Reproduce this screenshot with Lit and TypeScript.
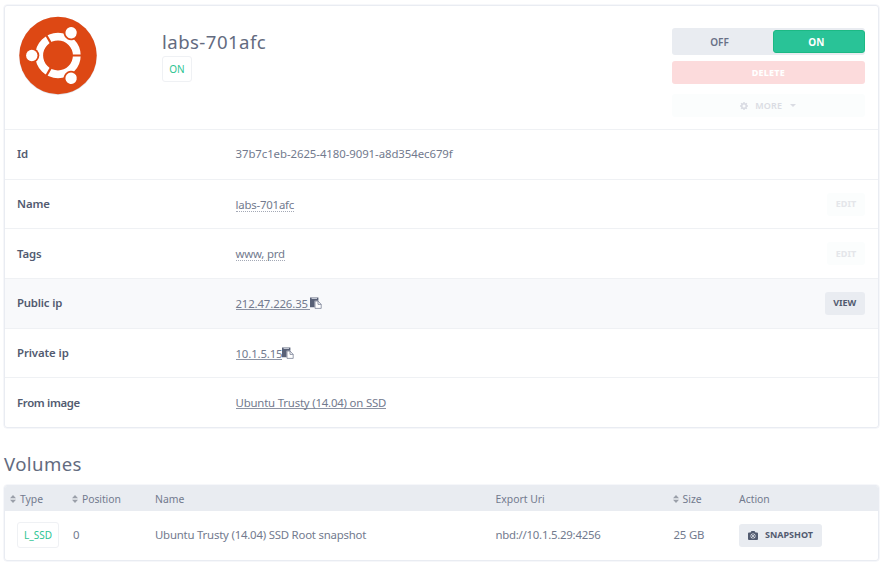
import { LitElement, html, css, svg, nothing } from "lit";
import { customElement } from "lit/decorators.js";
import { classMap } from "lit/directives/class-map.js";

interface Detail {
  label: string;
  value: string;
  kind: "plain" | "dotted" | "link" | "ip";
  gap?: boolean;
  action?: "EDIT" | "VIEW";
  active?: boolean;
}

const details: Detail[] = [
  { label: "Id", value: "37b7c1eb-2625-4180-9091-a8d354ec679f", kind: "plain" },
  { label: "Name", value: "labs-701afc", kind: "dotted", action: "EDIT" },
  { label: "Tags", value: "www, prd", kind: "dotted", action: "EDIT" },
  { label: "Public ip", value: "212.47.226.35", kind: "ip", gap: true, action: "VIEW", active: true },
  { label: "Private ip", value: "10.1.5.15", kind: "ip" },
  { label: "From image", value: "Ubuntu Trusty (14.04) on SSD", kind: "link" },
];

const segments = [0, 120, 240];

const logo = html`<svg class="logo" viewBox="0 0 80 80" width="80" height="80">
  <circle cx="40" cy="40.9" r="39" fill="#dfe3ec" />
  <circle cx="40" cy="40.5" r="38.7" fill="#dd4814" />
  <g transform="translate(0 .5)">
    <circle cx="40" cy="40" r="18.8" fill="none" stroke="#fff" stroke-width="7.8" />
    ${segments.map(
      (a) => svg`<g transform="rotate(${a} 40 40)">
        <path d="M52 40H66" stroke="#dd4814" stroke-width="2.2" />
        <circle cx="13.8" cy="40" r="7.5" fill="#dd4814" />
        <circle cx="13.8" cy="40" r="5.7" fill="#fff" />
      </g>`
    )}
  </g>
</svg>`;

const pasteIcon = html`<svg class="paste" viewBox="0 0 12 12" width="12" height="12">
  <path d="M0 .4H8.4V3.8H4.6V10.2H0Z" fill="#596177" />
  <path d="M1.6 1.4H7" stroke="#c9cdd8" stroke-width="1.1" />
  <path d="M5 4H8L11.2 7.4V11.4H5Z" fill="#fff" stroke="#7b8295" stroke-width=".8" />
  <path d="M8 4V7.4H11.2" fill="none" stroke="#7b8295" stroke-width=".8" />
</svg>`;

const gearIcon = html`<svg class="gear" viewBox="0 0 16 16" width="8" height="8">
  <circle cx="8" cy="8" r="4.6" fill="none" stroke="currentColor" stroke-width="3.2" />
  ${[0, 45, 90, 135].map(
    (a) => svg`<path d="M8 0V3M8 13V16" stroke="currentColor" stroke-width="3" transform="rotate(${a} 8 8)" />`
  )}
</svg>`;

const caret = html`<svg class="caret" viewBox="0 0 6 3" width="6" height="3"><path d="M0 0H6L3 3Z" fill="currentColor" /></svg>`;

const cameraIcon = html`<svg class="camera" viewBox="0 0 20 18" width="10" height="9">
  <path fill="currentColor" fill-rule="evenodd" d="M2 3H5L7 0H13L15 3H18Q20 3 20 5V16Q20 18 18 18H2Q0 18 0 16V5Q0 3 2 3ZM10 5A5 5 0 1 0 10 15A5 5 0 1 0 10 5Z" />
  <circle cx="10" cy="10" r="3" fill="none" stroke="currentColor" stroke-width="1.8" />
</svg>`;

const sortIcon = html`<svg class="sort" viewBox="0 0 6 8" width="6" height="8">
  <path d="M3 0L6 3.2H0ZM3 8L6 4.8H0Z" fill="#9a9fa9" />
</svg>`;

@customElement("app-root")
export class AppRoot extends LitElement {
  static styles = css`
    :host {
      display: block;
      box-sizing: border-box;
      height: 566px;
      padding: 5px 6px 0 4px;
      overflow: hidden;
      background: #fff;
      color: #727a8e;
      font: 11.4px/16px "Noto Sans", "Open Sans", sans-serif;
    }
    * { box-sizing: border-box; }
    svg { display: block; flex: none; }
    .card {
      border: 1px solid #e9ecf2;
      border-radius: 3px;
      box-shadow: 0 0 0 0.5px #eef0f5;
      overflow: hidden;
    }
    .server { height: 423px; display: flex; flex-direction: column; }
    .head { height: 123px; flex: none; display: flex; padding: 9px 13px 0 13px; }
    .text { margin: 15px 0 0 64px; flex: 1; }
    h1, h2 { margin: 0; font-weight: 400; color: #636b80; }
    h1 { font-size: 18.6px; line-height: 24px; letter-spacing: 0.45px; }
    .badge {
      display: flex; align-items: center; justify-content: center;
      width: 30px; height: 26px; margin-top: 2px;
      border: 1px solid #eff1f4; border-radius: 3px;
      font-size: 10px; line-height: 14px; color: #2dc492;
    }
    .controls { width: 193.5px; margin-top: 13px; display: flex; flex-direction: column; }
    .toggle {
      height: 27px; display: flex; padding: 2px 0; border-radius: 3px;
      background: #e9ecf1; font-size: 10px; font-weight: 600; color: #687086;
    }
    .toggle div { display: flex; align-items: center; justify-content: center; }
    .off { flex: 1; padding-right: 5px; }
    .on { width: 92.5px; padding-right: 5px; border: 1px solid #1cb984; border-radius: 3px; background: #29c397; color: #fff; font-weight: 700; }
    .btn {
      display: flex; align-items: center; justify-content: center;
      height: 23px; border-radius: 3px; background: #e9ecf1;
      color: #525b70; font-size: 9px; line-height: 12px; font-weight: 700;
    }
    .delete { margin-top: 6px; background: #fcdbdc; color: #fff; font-weight: 800; letter-spacing: 0.2px; }
    .more { margin-top: 10px; background: #fbfdfd; color: #dadce3; letter-spacing: 0.2px; font-weight: 600; }
    .gear { margin-right: 7px; }
    .caret { margin-left: 8px; }
    .rows { flex: 1; display: flex; flex-direction: column; }
    .row {
      flex: 1; display: grid; grid-template-columns: 218.5px 1fr auto;
      align-items: center; padding: 0 13px 0 12px; border-top: 1px solid #eff1f4;
    }
    .row.active { background: #f8f9fb; }
    .label { font-weight: 600; color: #525b70; letter-spacing: -0.1px; }
    .row:last-child .label { letter-spacing: -0.35px; }
    .row.active .label { letter-spacing: -0.2px; }
    .value { display: flex; align-items: center; letter-spacing: -0.07px; }
    .dotted, .link { line-height: 13px; border-bottom: 1px dotted #a4a9b6; margin-top: 1px; }
    .dotted { letter-spacing: -0.2px; }
    .link { line-height: 11px; letter-spacing: -0.19px; border-bottom: 1px solid #8c93a3; }
    .ip { letter-spacing: -0.15px; }
    .gap { padding-right: 2.5px; }
    .edit { width: 38px; background: #fbfdfd; color: #e4e6ea; }
    .view { width: 40.5px; }
    h2 { margin-top: 22px; font-size: 18.6px; line-height: 28px; letter-spacing: 0.4px; }
    .volumes { height: 76px; margin-top: 7px; }
    .grid { display: grid; grid-template-columns: 67px 83px 340.5px 177px 66.5px 1fr; align-items: center; }
    .thead { height: 25px; background: #e9ecf1; font-size: 10.4px; }
    .thead div { display: flex; align-items: center; }
    .thead .sortable { padding-left: 5px; }
    .sort { margin-right: 4px; }
    .thead .position-head { letter-spacing: -0.08px; }
    .tbody { height: 48px; }
    .ssd { width: 42px; margin: 0 0 0 12px; }
    .position { padding-left: 1px; }
    .volume-name { letter-spacing: -0.21px; }
    .uri { letter-spacing: -0.25px; }
    .snapshot { width: 83px; }
    .camera { margin-right: 7px; }
    .sizecell { padding-left: 1px; letter-spacing: -0.2px; }
  `;

  private renderValue(d: Detail) {
    const classes = {
      dotted: d.kind === "dotted",
      link: d.kind === "link" || d.kind === "ip",
      ip: d.kind === "ip",
      gap: !!d.gap,
    };
    return html`<div class="value">
      <span class=${classMap(classes)}>${d.value}</span>${d.kind === "ip" ? pasteIcon : nothing}
    </div>`;
  }

  render() {
    return html`
      <section class="card server">
        <header class="head">
          ${logo}
          <div class="text">
            <h1>labs-701afc</h1>
            <div class="badge">ON</div>
          </div>
          <div class="controls">
            <div class="toggle"><div class="off">OFF</div><div class="on">ON</div></div>
            <div class="btn delete">DELETE</div>
            <div class="btn more">${gearIcon}MORE${caret}</div>
          </div>
        </header>
        <div class="rows">
          ${details.map(
            (d) => html`<div class=${classMap({ row: true, active: !!d.active })}>
              <div class="label">${d.label}</div>
              ${this.renderValue(d)}
              ${d.action
                ? html`<div class=${classMap({ btn: true, edit: d.action === "EDIT", view: d.action === "VIEW" })}>${d.action}</div>`
                : nothing}
            </div>`
          )}
        </div>
      </section>
      <h2>Volumes</h2>
      <section class="card volumes">
        <div class="grid thead">
          <div class="sortable">${sortIcon}Type</div>
          <div class="position-head">${sortIcon}Position</div>
          <div>Name</div>
          <div>Export Uri</div>
          <div>${sortIcon}Size</div>
          <div>Action</div>
        </div>
        <div class="grid tbody">
          <div><div class="badge ssd">L_SSD</div></div>
          <div class="position">0</div>
          <div class="volume-name">Ubuntu Trusty (14.04) SSD Root snapshot</div>
          <div class="uri">nbd://10.1.5.29:4256</div>
          <div class="sizecell">25 GB</div>
          <div><div class="btn snapshot">${cameraIcon}SNAPSHOT</div></div>
        </div>
      </section>
    `;
  }
}
